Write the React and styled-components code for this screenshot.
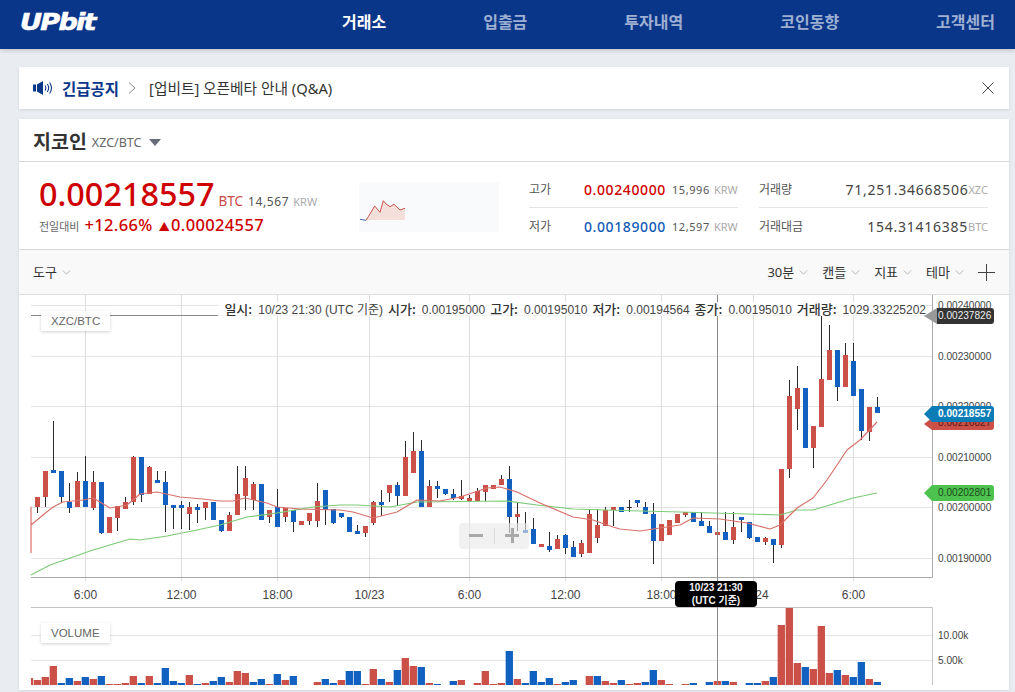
import React from 'react';
import styled, {createGlobalStyle} from 'styled-components';

const GlobalStyle = createGlobalStyle`
  html, body{
    margin: 0;
    padding: 0;
    height: 100%;
    overflow: hidden;
    background-color: #e9ecf1;
    font-family: "Noto Sans", "Noto Sans CJK KR", sans-serif;
  }
`;

const Page = styled.div`
  height: 692px;
  overflow: hidden;
`;

const Header = styled.header`
  height: 49px;
  padding: 0 20px;
  background-color: #0a368a;
  box-shadow: 0 2px 4px rgba(0, 0, 0, .15);
  display: flex;
  align-items: center;
  justify-content: space-between;
`;

const Logo = styled.div`
  font-family: "DejaVu Sans", sans-serif;
  font-size: 23px;
  font-weight: 700;
  font-style: italic;
  letter-spacing: -1.5px;
  color: #fff;
  -webkit-text-stroke: .6px #fff;
  transform-origin: left center;
  transform: translateY(-3px) scaleX(1.18);
`;

const Nav = styled.nav`
  display: flex;
  gap: 97px;
`;

const NavItem = styled.a`
  font-size: 16px;
  font-weight: 700;
  line-height: 20px;
  transform: translateY(-3px);
  color: ${p => (p.$active ? '#fff' : '#9db0d2')};
`;

const Main = styled.main`
  padding: 18px 6px 0 19px;
  display: flex;
  flex-direction: column;
  gap: 10px;
`;

const Notice = styled.section`
  height: 42px;
  padding: 0 15px 0 14px;
  background-color: #fff;
  box-shadow: 0 1px 3px rgba(0, 0, 0, .1);
  display: flex;
  align-items: center;
`;

const NoticeTitle = styled.strong`
  margin-left: 9px;
  font-size: 15.5px;
  font-weight: 700;
  color: #0a368a;
`;

const NoticeText = styled.span`
  margin-left: 13px;
  flex: 1;
  font-size: 14.7px;
  color: #333;
  transform: translateY(-1px);
`;

const Card = styled.section`
  height: 571px;
  background-color: #fff;
  box-shadow: 0 1px 3px rgba(0, 0, 0, .1);
`;

const TitleRow = styled.div`
  height: 42px;
  padding-left: 14px;
  border-bottom: 1px solid #d8d8d8;
  display: flex;
  align-items: center;
`;

const CoinName = styled.h1`
  margin: 0;
  font-size: 19.5px;
  font-weight: 700;
  color: #333;
`;

const CoinPair = styled.span`
  margin-left: 5px;
  font-size: 12.5px;
  color: #666;
  transform: translateY(2px);
`;

const Caret = styled.i`
  margin-left: 8px;
  width: 0;
  height: 0;
  border-left: 6.5px solid transparent;
  border-right: 6.5px solid transparent;
  border-top: 7px solid #666c78;
  transform: translateY(2px);
`;

const PriceRow = styled.div`
  height: 87px;
  padding-left: 20px;
  border-bottom: 1px solid #d8d8d8;
  display: flex;
`;

const PriceBlock = styled.div`
  width: 320px;
  padding-top: 10px;
`;

const PriceLine = styled.div`
  height: 42px;
  display: flex;
  align-items: baseline;
  white-space: nowrap;
`;

const BigPrice = styled.span`
  font-size: 32.4px;
  line-height: 42px;
  font-weight: 500;
  color: #cf0000;
`;

const Unit = styled.span`
  margin-left: 4px;
  font-size: 13.5px;
  color: #c84a44;
`;

const Krw = styled.span`
  margin-left: ${p => p.$gap || 5}px;
  font-size: ${p => p.$size || 12}px;
  letter-spacing: .6px;
  color: #555;
`;

const KrwLabel = styled.span`
  margin-left: 4px;
  font-size: 11px;
  color: #aaa;
`;

const ChangeLine = styled.div`
  margin-top: -1px;
  display: flex;
  align-items: baseline;
  white-space: nowrap;
`;

const ChangeLabel = styled.span`
  font-size: 11px;
  color: #666;
`;

const ChangeValue = styled.span`
  margin-left: ${p => p.$gap}px;
  font-size: 16.5px;
  font-weight: 500;
  letter-spacing: .35px;
  color: #cf0000;
`;

const UpMark = styled.span`
  font-size: 11px;
  margin-right: 1px;
`;

const Spark = styled.div`
  margin-top: 20px;
  width: 140px;
  height: 50px;
  background-color: #f9fafc;
`;

const StatGroup = styled.div`
  margin-top: 9px;
  margin-left: ${p => p.$left}px;
  width: ${p => p.$width}px;
  display: flex;
  flex-direction: column;
`;

const StatRow = styled.div`
  height: 36px;
  display: flex;
  align-items: center;
  white-space: nowrap;
  &:first-child{
    height: 36px;
    border-bottom: 1px solid #e4e4e4;
  }
`;

const StatLabel = styled.span`
  flex: none;
  font-size: 12px;
  color: #555;
  width: ${p => p.$width || 'auto'};
`;

const StatPrice = styled.span`
  flex: none;
  font-size: 14px;
  font-weight: 500;
  letter-spacing: .6px;
  color: ${p => (p.$down ? '#0f5bb8' : '#cf0000')};
`;

const StatAmount = styled.span`
  margin-left: auto;
  font-size: 14px;
  letter-spacing: .75px;
  color: #444;
`;

const StatUnit = styled.span`
  font-size: 11px;
  color: #aaa;
`;

const Toolbar = styled.div`
  height: 44px;
  padding: 0 14px;
  border-bottom: 1px solid #ddd;
  background-color: #f9f9f9;
  display: flex;
  align-items: center;
`;

const ToolGroup = styled.div`
  margin-left: auto;
  display: flex;
  align-items: center;
  gap: 14px;
`;

const ToolButton = styled.button`
  padding: 0;
  border: 0;
  background: none;
  font-family: inherit;
  font-size: 13px;
  line-height: 18px;
  color: #333;
  display: flex;
  align-items: center;
  gap: 5px;
`;

const Chart = styled.div`
  position: relative;
  height: 395px;
`;

const ChartSvg = styled.svg`
  display: block;
`;

const AxisText = styled.text`
  font-family: "Liberation Sans", sans-serif;
  font-size: ${p => p.$size || 10.1}px;
  fill: #444;
`;

const Legend = styled.div`
  position: absolute;
  top: 7px;
  right: 83px;
  height: 14px;
  padding-left: 6px;
  background-color: rgba(255, 255, 255, .88);
  display: flex;
  gap: 5px;
  font-family: "Liberation Sans", "Noto Sans CJK KR", sans-serif;
  font-size: 12px;
  line-height: 14px;
  color: #444;
  white-space: nowrap;
`;

const LegendKey = styled.b`
  margin-right: 6px;
  font-family: "Noto Sans CJK KR", sans-serif;
  font-size: 13px;
  font-weight: 500;
  color: #333;
`;

const PaneLabel = styled.div`
  position: absolute;
  left: 22px;
  top: ${p => p.$top}px;
  height: 20px;
  padding: 0 10px;
  background-color: rgba(255, 255, 255, .9);
  box-shadow: 0 1px 3px rgba(0, 0, 0, .18);
  font-family: "Liberation Sans", sans-serif;
  font-size: 11.5px;
  line-height: 20px;
  color: #666;
`;

const ZoomControl = styled.div`
  position: absolute;
  left: 440px;
  top: 228px;
  width: 70px;
  height: 26px;
  border-radius: 4px;
  background-color: rgba(232, 232, 232, .62);
  display: flex;
  align-items: center;
`;

const ZoomButton = styled.span`
  position: relative;
  width: 35px;
  height: 26px;
  &:first-child{
    border-right: 1px solid #ddd;
    height: 16px;
  }
  &::before{
    content: "";
    position: absolute;
    left: 10px;
    top: ${p => (p.$plus ? 11 : 6)}px;
    width: 14px;
    height: 3px;
    background-color: #a9a9a9;
  }
  &::after{
    content: "";
    display: ${p => (p.$plus ? 'block' : 'none')};
    position: absolute;
    left: 16px;
    top: 5px;
    width: 3px;
    height: 15px;
    background-color: #a9a9a9;
  }
`;

const PriceTag = styled.div`
  position: absolute;
  left: 905px;
  top: ${p => p.$top}px;
  height: ${p => p.$height || 16}px;
  display: flex;
  font-family: "Liberation Sans", sans-serif;
  font-size: 10.1px;
  font-weight: ${p => (p.$bold ? 700 : 400)};
  color: ${p => p.$color};
  &::before{
    content: "";
    width: 0;
    border-top: ${p => (p.$height || 16) / 2}px solid transparent;
    border-bottom: ${p => (p.$height || 16) / 2}px solid transparent;
    border-right: ${p => p.$arrow || 8}px solid ${p => p.$tip || p.$bg};
  }
`;

const PriceTagBody = styled.span`
  width: ${p => p.$width}px;
  padding-left: ${p => p.$pad}px;
  border-radius: 0 3px 3px 0;
  background-color: ${p => p.$bg};
  line-height: ${p => p.$line || 16}px;
`;

const TimeTag = styled.div`
  position: absolute;
  left: 656px;
  top: 286px;
  width: 82px;
  height: 26px;
  border-radius: 4px;
  background-color: #000;
  font-family: "Liberation Sans", "Noto Sans CJK KR", sans-serif;
  font-size: 10px;
  font-weight: 700;
  line-height: 13px;
  text-align: center;
  color: #f2f2f2;
`;

const RED = '#cb5048';
const BLUE = '#1261c0';

// c, wick top, body top, body bottom, wick bottom (page px)
const CANDLES = [
  'R 497 497 507 513', 'R 471 471 497 507', 'B 421 470 473 473', 'B 471 471 497 503', 'B 483 502 508 513',
  'R 472 481 507 507', 'B 456 481 507 507', 'R 471 482 508 510', 'B 482 482 533 534', 'R 517 517 533 533',
  'R 506 506 518 531', 'R 497 502 509 509', 'R 456 457 502 505', 'B 457 457 495 502', 'R 466 467 494 494',
  'B 471 480 483 483', 'B 471 482 505 532', 'B 505 505 508 529', 'B 501 505 508 529', 'R 502 507 514 530',
  'B 504 507 510 523', 'R 502 502 508 520', 'B 502 502 520 520', 'B 520 520 531 532', 'R 512 515 531 531',
  'R 466 494 515 515', 'R 466 478 496 510', 'R 482 484 500 510', 'B 484 484 520 520', 'R 510 510 517 523',
  'B 489 507 527 527', 'R 508 508 517 522', 'B 510 510 522 532', 'R 521 521 525 525', 'R 513 513 521 525',
  'R 483 501 521 527', 'B 490 490 510 525', 'B 509 509 523 524', 'B 513 513 517 518', 'B 517 517 532 532',
  'B 525 531 534 534', 'R 526 526 533 537', 'R 501 502 523 525', 'B 490 502 505 516', 'R 485 485 493 502',
  'B 482 485 496 506', 'R 441 457 496 496', 'R 432 451 473 473', 'B 440 451 507 507', 'R 480 486 507 507',
  'B 481 486 489 498', 'B 489 489 494 495', 'B 489 494 498 500', 'R 480 496 499 500', 'R 495 498 501 501',
  'R 488 491 501 501', 'R 485 485 492 501', 'R 485 485 489 489', 'R 475 479 485 485', 'B 466 479 517 533',
  'R 502 514 517 531', 'B 512 530 533 533', 'B 518 529 544 544', 'R 544 544 547 547', 'B 532 546 550 552',
  'R 535 539 549 549', 'B 534 535 548 554', 'B 541 547 557 557', 'R 540 543 554 557', 'R 509 514 553 553',
  'R 509 525 538 543', 'R 507 510 526 526', 'R 507 507 510 526', 'B 507 507 512 512', 'D 500 507 508 512',
  'B 500 500 503 507', 'B 502 507 514 514', 'B 503 514 541 564', 'R 524 524 541 541', 'R 520 520 535 535',
  'R 514 514 523 523', 'R 512 512 515 517', 'B 512 512 522 522', 'B 512 521 526 526', 'B 521 526 533 533',
  'R 532 532 535 535', 'B 512 532 540 540', 'R 512 527 540 544', 'B 517 517 520 532', 'B 522 522 538 539',
  'B 537 537 542 542', 'R 537 538 542 545', 'B 539 539 545 563', 'R 469 469 545 548', 'R 380 396 469 478',
  'R 366 388 409 430', 'B 388 388 448 448', 'R 426 426 448 468', 'R 315 379 427 427', 'R 325 350 380 380',
  'B 350 350 387 401', 'R 343 355 387 387', 'B 343 361 396 396', 'B 389 389 431 440', 'R 407 407 432 441',
  'B 397 407 413 413',
].map(row => {
  const [c, wt, bt, bb, wb] = row.split(' ');
  return {c, wt: +wt, bt: +bt, bb: +bb, wb: +wb};
});

// colour + bar top (page px), one per candle; -- = no bar
const VOLUME = (
  'R680 R677 R666 B683 B678 R681 B677 R679 B676 R684 R684 R683 R676 B683 R676 B683 B668 B681 B683 R675 ' +
  'B684 R683 B681 B677 R682 R671 R673 B682 B679 R684 B674 R680 B676 -- -- R682 B679 B683 R680 B671 ' +
  'B671 R684 R669 B679 R682 B670 R658 R666 B667 R683 B684 -- B681 R680 -- R683 R671 R684 R683 B651 ' +
  'R679 B683 B671 B682 B678 R684 B682 B680 -- R676 B676 R681 R683 B680 R684 R683 B682 B670 R680 R684 ' +
  '-- R684 B683 -- B682 R681 B681 R682 -- B683 B683 R681 B677 R625 R608 R663 B667 R669 R626 R673 ' +
  'B670 R675 B677 B662 R679 B682'
).split(' ');

const candleX = i => 37.33 + 8 * i;

const MA_RED = 'M31 553L31 507L31 525L43 515L53 507L63 502L83 500L93 498L100 502L110 508L127 505L140 494L157 492L180 497L203 499L220 501L233 501L245 498L267 503L277 507L300 509L340 510L353 512L373 518L397 512L417 500L440 501L460 497L487 488L500 487L517 492L540 503L573 517L593 520L613 527L620 529L640 531L680 525L693 518L720 519L747 523L770 529L780 525L797 508L813 498L827 480L847 450L860 440L877 422';
const MA_GREEN = 'M31 575L50 565L93 550L130 539L140 540L167 536L197 530L220 525L247 517L277 513L313 507L340 505L357 505L390 507L417 502L507 501L537 505L573 509L640 511L680 512L780 515L797 510L813 510L853 498L877 493';

const H_GRID = [305.5, 356.5, 406.5, 457.5, 507.5, 558.5];
const V_GRID = [85.5, 181.5, 277.5, 369.5, 469.5, 565.5, 661.5, 753.5, 853.5];
const X_LABELS = [[85.5, '6:00'], [181.5, '12:00'], [277.5, '18:00'], [369.5, '10/23'], [469.5, '6:00'], [565.5, '12:00'], [661.5, '18:00'], [762, '24'], [853.5, '6:00']];
const Y_LABELS = ['0.00240000', '0.00230000', '0.00220000', '0.00210000', '0.00200000', '0.00190000'];

const Chevron = ({color = '#aaa', w = 9, h = 5}) => (
  <svg width={w} height={h} viewBox="0 0 10 6" fill="none">
    <path d="M.5 .5L5 5L9.5 .5" stroke={color} strokeWidth="1" />
  </svg>
);

const Speaker = () => (
  <svg width="20" height="14" viewBox="0 0 20 14" fill="none">
    <path d="M0 3.500h3v7H0zM4 3.500L10 0V14L4 10.500z" fill="#0a368a" />
    <path d="M12 4.500c1 1.500 1 3.500 0 5M14.300 3c1.700 2.500 1.700 5.500 0 8M16.600 1.500c2.400 3.500 2.400 7.500 0 11" stroke="#0a368a" strokeWidth="1.100" />
  </svg>
);

const Sparkline = () => (
  <svg width="140" height="50" viewBox="0 0 140 50" fill="none">
    <path d="M7 38L9.300 34.700L15.700 24L21 30.300L24.300 18.700L27 22L31 24.700L35 22.300L41 28L46 26.300V38Z" fill="#f5dfdb" />
    <path d="M1 37.300L7 38.300" stroke="#4a6fb5" strokeWidth="1" />
    <path d="M7 38.300L9.300 34.700L15.700 24L21 30.300L24.300 18.700L27 22L31 24.700L35 22.300L41 28L46 26.300" stroke="#c9544c" strokeWidth="1" />
  </svg>
);

const Plot = () => (
  <ChartSvg width="990" height="395" viewBox="19 295 990 395" fill="none">
    {H_GRID.map(y => <path key={y} d={`M31 ${y}H932`} stroke="#e4e4e4" />)}
    {V_GRID.map(x => <path key={x} d={`M${x} 295V581`} stroke="#dedede" />)}
    <path d="M31 577.500H932.500V295" stroke="#a8a8a8" />

    {Y_LABELS.map((t, i) => <AxisText key={t} x="938" y={H_GRID[i] + 3.500}>{t}</AxisText>)}
    {X_LABELS.map(([x, t]) => <AxisText key={x} $size={12} x={x} y="599" textAnchor="middle">{t}</AxisText>)}

    {CANDLES.map((k, i) => {
      const x = candleX(i);
      const fill = k.c === 'R' ? RED : BLUE;
      return (
        <g key={i}>
          <path d={`M${Math.round(x) + .5} ${k.wt}V${k.wb}`} stroke="#2a2a2a" />
          {k.c === 'D'
            ? <path d={`M${x - 2.500} ${k.bt + .5}h5`} stroke="#2a2a2a" />
            : <rect x={Math.round(x) - 2} y={k.bt} width="5" height={k.bb - k.bt} fill={fill} />}
        </g>
      );
    })}
    <path d={MA_GREEN} stroke="#7ccb75" strokeWidth="1.200" strokeLinejoin="round" />
    <path d={MA_RED} stroke="#d9716b" strokeWidth="1.200" strokeLinejoin="round" />

    <path d="M31 607.500H932.500V685" stroke="#c4c4c4" />
    <path d="M31 635.500H932M31 660.500H932" stroke="#e4e4e4" />
    {VOLUME.map((v, i) => {
      if (v === '--') return null;
      const top = +v.slice(1);
      return <rect key={i} x={candleX(i) - 3.670} y={top} width="7.300" height={685 - top} fill={v[0] === 'R' ? RED : BLUE} />;
    })}
    <rect x="31" y="678" width="2" height="7" fill={RED} />
    <AxisText x="938" y="639">10.00k</AxisText>
    <AxisText x="938" y="664">5.00k</AxisText>

    <path d="M717.500 295V685" stroke="#8a8a8a" />
    <path d="M31 315.500H930" stroke="#8a8a8a" />
  </ChartSvg>
);

const App = () => {
  return (
    <Page>
      <GlobalStyle />
      <Header>
        <Logo>UPbit</Logo>
        <Nav>
          <NavItem $active>거래소</NavItem>
          <NavItem>입출금</NavItem>
          <NavItem>투자내역</NavItem>
          <NavItem>코인동향</NavItem>
          <NavItem>고객센터</NavItem>
        </Nav>
      </Header>

      <Main>
        <Notice>
          <Speaker />
          <NoticeTitle>긴급공지</NoticeTitle>
          <svg width="8" height="12" viewBox="0 0 8 12" fill="none" style={{marginLeft: 9}}>
            <path d="M1 .5L7 6L1 11.500" stroke="#888" />
          </svg>
          <NoticeText>[업비트] 오픈베타 안내 (Q&amp;A)</NoticeText>
          <svg width="12" height="12" viewBox="0 0 12 12" fill="none">
            <path d="M.5 .5L11.500 11.500M11.500 .5L.5 11.500" stroke="#444" />
          </svg>
        </Notice>

        <Card>
          <TitleRow>
            <CoinName>지코인</CoinName>
            <CoinPair>XZC/BTC</CoinPair>
            <Caret />
          </TitleRow>

          <PriceRow>
            <PriceBlock>
              <PriceLine>
                <BigPrice>0.00218557</BigPrice>
                <Unit>BTC</Unit>
                <Krw>14,567</Krw>
                <KrwLabel>KRW</KrwLabel>
              </PriceLine>
              <ChangeLine>
                <ChangeLabel>전일대비</ChangeLabel>
                <ChangeValue $gap={5}>+12.66%</ChangeValue>
                <ChangeValue $gap={6}><UpMark>▲</UpMark>0.00024557</ChangeValue>
              </ChangeLine>
            </PriceBlock>
            <Spark><Sparkline /></Spark>
            <StatGroup $left={30} $width={209}>
              <StatRow>
                <StatLabel $width="55px">고가</StatLabel>
                <StatPrice>0.00240000</StatPrice>
                <Krw $gap={6} $size={11}>15,996</Krw>
                <KrwLabel>KRW</KrwLabel>
              </StatRow>
              <StatRow>
                <StatLabel $width="55px">저가</StatLabel>
                <StatPrice $down>0.00189000</StatPrice>
                <Krw $gap={6} $size={11}>12,597</Krw>
                <KrwLabel>KRW</KrwLabel>
              </StatRow>
            </StatGroup>
            <StatGroup $left={21} $width={229}>
              <StatRow>
                <StatLabel>거래량</StatLabel>
                <StatAmount>71,251.34668506</StatAmount>
                <StatUnit>XZC</StatUnit>
              </StatRow>
              <StatRow>
                <StatLabel>거래대금</StatLabel>
                <StatAmount>154.31416385</StatAmount>
                <StatUnit>BTC</StatUnit>
              </StatRow>
            </StatGroup>
          </PriceRow>

          <Toolbar>
            <ToolButton>도구 <Chevron /></ToolButton>
            <ToolGroup>
              <ToolButton>30분 <Chevron /></ToolButton>
              <ToolButton>캔들 <Chevron /></ToolButton>
              <ToolButton>지표 <Chevron /></ToolButton>
              <ToolButton>테마 <Chevron /></ToolButton>
              <svg width="17" height="17" viewBox="0 0 17 17" fill="none">
                <path d="M0 8.500H17M8.500 0V17" stroke="#444" />
              </svg>
            </ToolGroup>
          </Toolbar>

          <Chart>
            <Plot />
            <Legend>
              <span><LegendKey>일시:</LegendKey>10/23 21:30 (UTC 기준)</span>
              <span><LegendKey>시가:</LegendKey>0.00195000</span>
              <span><LegendKey>고가:</LegendKey>0.00195010</span>
              <span><LegendKey>저가:</LegendKey>0.00194564</span>
              <span><LegendKey>종가:</LegendKey>0.00195010</span>
              <span><LegendKey>거래량:</LegendKey>1029.33225202</span>
            </Legend>
            <PaneLabel $top={16}>XZC/BTC</PaneLabel>
            <PaneLabel $top={328}>VOLUME</PaneLabel>
            <ZoomControl>
              <ZoomButton />
              <ZoomButton $plus />
            </ZoomControl>
            <PriceTag $top={13} $arrow={13} $tip="#999" $bg="#333" $color="#eee">
              <PriceTagBody $bg="#333" $width={56} $pad={1}>0.00237826</PriceTagBody>
            </PriceTag>
            <PriceTag $top={123} $height={12} $bg="#cb5048" $color="#5a1a16">
              <PriceTagBody $bg="#cb5048" $width={56} $pad={6} $line={10}>0.00216827</PriceTagBody>
            </PriceTag>
            <PriceTag $top={111} $bold $bg="#0b7cb6" $color="#fff">
              <PriceTagBody $bg="#0b7cb6" $width={56} $pad={6}>0.00218557</PriceTagBody>
            </PriceTag>
            <PriceTag $top={190} $bg="#4dc24f" $color="#1d4a1d">
              <PriceTagBody $bg="#4dc24f" $width={56} $pad={6}>0.00202801</PriceTagBody>
            </PriceTag>
            <TimeTag>10/23 21:30<br />(UTC 기준)</TimeTag>
          </Chart>
        </Card>
      </Main>
    </Page>
  );
};

export default App;
